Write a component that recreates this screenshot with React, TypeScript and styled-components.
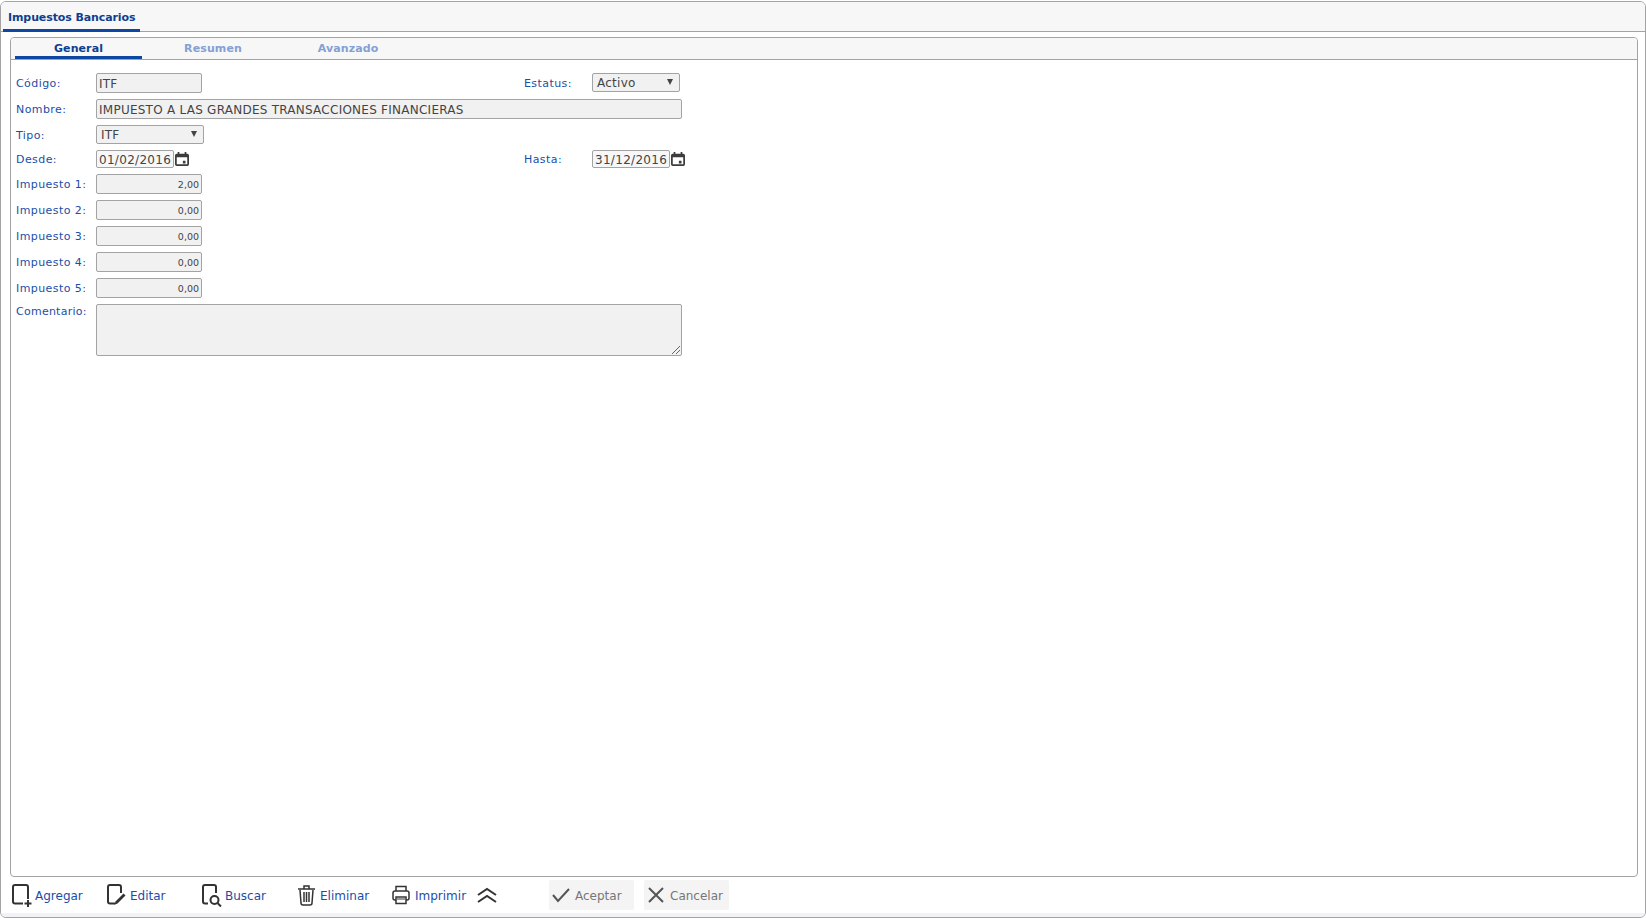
import React from 'react';
import styled, { createGlobalStyle } from 'styled-components';

const Global = createGlobalStyle`
  html, body { margin: 0; padding: 0; background: #fff; }
  body { font-family: "DejaVu Sans", Verdana, sans-serif; font-size: 11px; }
  * { box-sizing: border-box; }
`;

const Outer = styled.div`
  margin: 1px 0 0 0;
  width: 1646px;
  height: 917px;
  border: 1px solid #a3a3a3;
  border-radius: 6px;
  display: flex;
  flex-direction: column;
  overflow: hidden;
  background: #fff;
`;
const TopBar = styled.div`
  height: 30px;
  flex: none;
  background: #f7f7f7;
  border-bottom: 1px solid #a3a3a3;
  padding-left: 2px;
  display: flex;
`;
const TopTab = styled.div`
  width: 137px;
  height: 30px;
  border-bottom: 3px solid #0e47a1;
  color: #0e3f8f;
  font-weight: bold;
  font-size: 11px;
  letter-spacing: -0.1px;
  padding: 9px 0 0 5px;
  line-height: 14px;
  white-space: nowrap;
`;
const Inner = styled.div`
  flex: none;
  margin: 5px 0 0 9px;
  width: 1628px;
  height: 840px;
  border: 1px solid #a3a3a3;
  border-radius: 4px;
  display: flex;
  flex-direction: column;
  overflow: hidden;
`;
const TabBar = styled.div`
  height: 22px;
  flex: none;
  background: #f7f7f7;
  border-bottom: 1px solid #a3a3a3;
  padding-left: 4px;
  display: flex;
`;
const Tab = styled.div<{ $active?: boolean; $w: number }>`
  width: ${p => p.$w}px;
  height: 21px;
  text-align: center;
  font-weight: bold;
  font-size: 11px;
  letter-spacing: 0.1px;
  line-height: 14px;
  padding-top: 4px;
  color: ${p => (p.$active ? '#0e3f8f' : '#84a0d4')};
  border-bottom: ${p => (p.$active ? '3px solid #0e47a1' : 'none')};
`;
const Form = styled.div`
  padding: 13px 0 0 5px;
  display: grid;
  grid-template-columns: 80px 428px 68px 1fr;
  align-items: start;
  justify-items: start;
`;
const Label = styled.div<{ $h: number; $tight?: boolean }>`
  color: #1c4ea8;
  font-size: 11px;
  line-height: ${p => p.$h}px;
  letter-spacing: ${p => (p.$tight ? '0.25px' : '0.42px')};
`;
const BaseInput = styled.div`
  background: #f1f1f1;
  border: 1px solid #a3a3a3;
  border-radius: 2px;
  color: #444;
  white-space: nowrap;
  overflow: hidden;
`;
const TextField = styled(BaseInput)<{ $w: number; $mb: number }>`
  width: ${p => p.$w}px;
  height: 20px;
  margin-bottom: ${p => p.$mb}px;
  font-size: 12px;
  letter-spacing: 0.25px;
  line-height: 20px;
  padding-left: 2px;
`;
const Wide = styled(TextField)`
  grid-column: 2 / 5;
`;
const NumberField = styled(BaseInput)`
  grid-column: 2 / 5;
  width: 106px;
  height: 20px;
  margin-bottom: 6px;
  text-align: right;
  font-size: 9.5px;
  line-height: 20px;
  padding-right: 2px;
`;
const Select = styled(BaseInput)<{ $w: number; $mb: number; $span?: boolean }>`
  width: ${p => p.$w}px;
  height: 19px;
  margin-bottom: ${p => p.$mb}px;
  font-size: 12px;
  letter-spacing: 0.25px;
  line-height: 19px;
  padding-left: 4px;
  position: relative;
  ${p => (p.$span ? 'grid-column: 2 / 5;' : '')}
`;
const Arrow = styled.span`
  position: absolute;
  right: 6px;
  top: 5px;
  width: 0;
  height: 0;
  border-left: 3px solid transparent;
  border-right: 3px solid transparent;
  border-top: 6px solid #444;
`;
const DateWrap = styled.div`
  display: flex;
  align-items: center;
  gap: 1px;
  margin-bottom: 6px;
`;
const DateField = styled(BaseInput)`
  width: 78px;
  height: 18px;
  font-size: 12px;
  letter-spacing: 0.3px;
  line-height: 19px;
  padding-left: 2px;
  background: #f7f7f7;
`;
const CommentBox = styled(BaseInput)`
  grid-column: 2 / 5;
  width: 586px;
  height: 52px;
  position: relative;
`;
const Grip = styled.svg`
  position: absolute;
  right: 0;
  bottom: 0;
`;
const Toolbar = styled.div`
  flex: 1;
  display: flex;
  align-items: flex-start;
  padding: 3px 0 0 11px;
  background: linear-gradient(#fff 0 36px, #f0f2f5 36px);
`;
const Tool = styled.div<{ $w: number; $gap?: number }>`
  width: ${p => p.$w}px;
  height: 30px;
  display: flex;
  align-items: center;
  gap: ${p => p.$gap ?? 2}px;
  color: #1c4ea8;
  font-size: 12px;
`;
const ToolText = styled.span`
  padding-top: 2px;
`;
const Chevrons = styled.div`
  width: 72px;
  height: 30px;
  display: flex;
  align-items: center;
`;
const ActionButton = styled.div`
  width: 85px;
  height: 30px;
  margin-right: 10px;
  background: #f4f4f4;
  border-radius: 2px;
  color: #777;
  font-size: 12px;
  display: flex;
  align-items: center;
  gap: 5px;
  padding-left: 3px;
`;

const S = { fill: 'none', stroke: '#333', strokeWidth: 2 } as const;

const Calendar = () => (
  <svg width="14" height="16" viewBox="0 0 16 18">
    <path fill="#3c3c3c" d="M3 1h2v2h6V1h2v2h1a2 2 0 0 1 2 2v10a2 2 0 0 1-2 2H2a2 2 0 0 1-2-2V5a2 2 0 0 1 2-2h1zM2 7v8h12V7zm7 4h3v3H9z" />
  </svg>
);
const AddIcon = () => (
  <svg width="21" height="24" viewBox="0 0 21 24">
    <path {...S} d="M11 20.500H3a2 2 0 0 1-2-2V4a2 2 0 0 1 2-2h11a2 2 0 0 1 2 2v12" />
    <path {...S} d="M16 17v7M12.500 20.500h7" />
  </svg>
);
const EditIcon = () => (
  <svg width="21" height="24" viewBox="0 0 21 24">
    <path {...S} d="M8 20.500H3a2 2 0 0 1-2-2V4a2 2 0 0 1 2-2h9a2 2 0 0 1 2 2v6" />
    <path fill="#333" d="M16.500 10.500l2 2-8 8-3 1.200 1-3.200z" />
  </svg>
);
const SearchIcon = () => (
  <svg width="21" height="24" viewBox="0 0 21 24">
    <path {...S} d="M6 20.500H3a2 2 0 0 1-2-2V4a2 2 0 0 1 2-2h9a2 2 0 0 1 2 2v6" />
    <circle {...S} cx="12.500" cy="17" r="4" />
    <path {...S} d="M15.500 20l3.500 3.500" />
  </svg>
);
const TrashIcon = () => (
  <svg width="20" height="22" viewBox="0 0 20 22">
    <path fill="none" stroke="#333" strokeWidth="1.500" d="M1 5h17M7 5V2h5v3M3 6l1 13a2 2 0 0 0 2 2h7a2 2 0 0 0 2-2l1-13" />
    <path fill="none" stroke="#333" strokeWidth="1.500" d="M7 8v10M9.500 8v10M12 8v10" />
  </svg>
);
const PrintIcon = () => (
  <svg width="18" height="20" viewBox="0 0 18 20">
    <path fill="none" stroke="#333" strokeWidth="1.500" d="M4 6V1.500h10V6M4 15H3a2 2 0 0 1-2-2V8a2 2 0 0 1 2-2h12a2 2 0 0 1 2 2v5a2 2 0 0 1-2 2h-1" />
    <path fill="none" stroke="#333" strokeWidth="1.500" d="M4 12h10v6.500H4z" />
    <path fill="#999" d="M5 13h8v2H5z" />
  </svg>
);
const ChevronsIcon = () => (
  <svg width="20" height="16" viewBox="0 0 20 16">
    <path fill="none" stroke="#333" strokeWidth="2" d="M1 8l9-6 9 6M1 15l9-6 9 6" />
  </svg>
);
const CheckIcon = () => (
  <svg width="18" height="18" viewBox="0 0 18 18">
    <path fill="none" stroke="#555" strokeWidth="2" d="M1 9l5 6L17 3" />
  </svg>
);
const CloseIcon = () => (
  <svg width="18" height="18" viewBox="0 0 18 18">
    <path fill="none" stroke="#555" strokeWidth="2" d="M2 2l14 14M16 2L2 16" />
  </svg>
);

export default function App() {
  return (
    <>
      <Global />
      <Outer>
        <TopBar><TopTab>Impuestos Bancarios</TopTab></TopBar>
        <Inner>
          <TabBar>
            <Tab $active $w={127}>General</Tab>
            <Tab $w={142}>Resumen</Tab>
            <Tab $w={128}>Avanzado</Tab>
          </TabBar>
          <Form>
            <Label $h={22}>Código:</Label>
            <TextField $w={106} $mb={6}>ITF</TextField>
            <Label $h={22}>Estatus:</Label>
            <Select $w={88} $mb={7}>Activo<Arrow /></Select>

            <Label $h={22}>Nombre:</Label>
            <Wide $w={586} $mb={6}>IMPUESTO A LAS GRANDES TRANSACCIONES FINANCIERAS</Wide>

            <Label $h={21}>Tipo:</Label>
            <Select $w={108} $mb={6} $span>ITF<Arrow /></Select>

            <Label $h={20}>Desde:</Label>
            <DateWrap><DateField>01/02/2016</DateField><Calendar /></DateWrap>
            <Label $h={20}>Hasta:</Label>
            <DateWrap><DateField>31/12/2016</DateField><Calendar /></DateWrap>

            {['2,00', '0,00', '0,00', '0,00', '0,00'].map((v, i) => (
              <React.Fragment key={i}>
                <Label $h={22}>Impuesto {i + 1}:</Label>
                <NumberField>{v}</NumberField>
              </React.Fragment>
            ))}

            <Label $h={16} $tight>Comentario:</Label>
            <CommentBox>
              <Grip width="11" height="11" viewBox="0 0 11 11">
                <path stroke="#666" d="M10 2L2 10M10 6L6 10" />
              </Grip>
            </CommentBox>
          </Form>
        </Inner>
        <Toolbar>
          <Tool $w={95}><AddIcon /><ToolText>Agregar</ToolText></Tool>
          <Tool $w={95}><EditIcon /><ToolText>Editar</ToolText></Tool>
          <Tool $w={95}><SearchIcon /><ToolText>Buscar</ToolText></Tool>
          <Tool $w={95} $gap={3}><TrashIcon /><ToolText>Eliminar</ToolText></Tool>
          <Tool $w={85} $gap={5}><PrintIcon /><ToolText>Imprimir</ToolText></Tool>
          <Chevrons><ChevronsIcon /></Chevrons>
          <ActionButton><CheckIcon /><ToolText>Aceptar</ToolText></ActionButton>
          <ActionButton><CloseIcon /><ToolText>Cancelar</ToolText></ActionButton>
        </Toolbar>
      </Outer>
    </>
  );
}
